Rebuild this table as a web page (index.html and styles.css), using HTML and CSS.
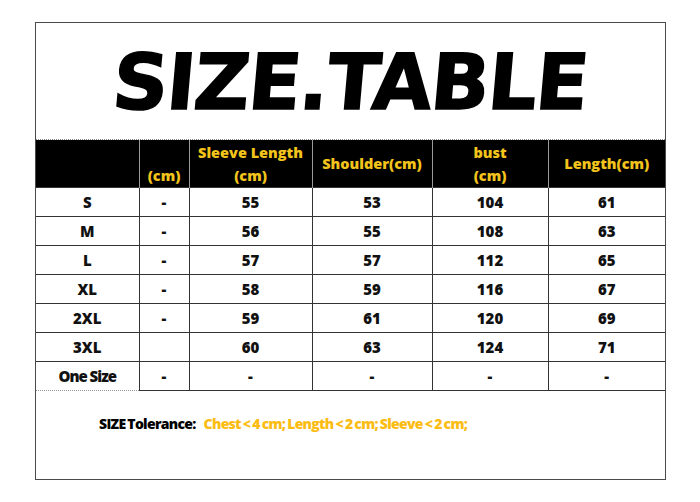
FILE: index.html
```html
<!DOCTYPE html>
<html>
<head>
<meta charset="utf-8">
<link rel="stylesheet" href="styles.css">
</head>
<body>
<div class="sheet">
  <div class="title"><span class="title-text">SIZE.TABLE</span></div>
  <table class="sizes">
    <colgroup>
      <col class="c1"><col class="c2"><col class="c3"><col class="c4"><col class="c5"><col class="c6">
    </colgroup>
    <thead>
      <tr>
        <th class="first"></th>
        <th class="bottom">(cm)</th>
        <th>Sleeve Length<br>(cm)</th>
        <th>Shoulder(cm)</th>
        <th>bust<br>(cm)</th>
        <th class="last">Length(cm)</th>
      </tr>
    </thead>
    <tbody>
      <tr><td class="first">S</td><td>-</td><td>55</td><td>53</td><td>104</td><td class="last">61</td></tr>
      <tr><td class="first">M</td><td>-</td><td>56</td><td>55</td><td>108</td><td class="last">63</td></tr>
      <tr><td class="first">L</td><td>-</td><td>57</td><td>57</td><td>112</td><td class="last">65</td></tr>
      <tr><td class="first">XL</td><td>-</td><td>58</td><td>59</td><td>116</td><td class="last">67</td></tr>
      <tr><td class="first">2XL</td><td>-</td><td>59</td><td>61</td><td>120</td><td class="last">69</td></tr>
      <tr><td class="first">3XL</td><td></td><td>60</td><td>63</td><td>124</td><td class="last">71</td></tr>
      <tr class="lastrow"><td class="first onesize">One Size</td><td>-</td><td>-</td><td>-</td><td>-</td><td class="last">-</td></tr>
    </tbody>
  </table>
  <div class="tolerance">
    <span class="tol-label">SIZE Tolerance:</span>
    <span class="tol-values">Chest &lt; 4 cm; Length &lt; 2 cm; Sleeve &lt; 2 cm;</span>
  </div>
</div>
</body>
</html>
```

FILE: styles.css
```css
html, body {
  margin: 0;
  padding: 0;
  background: #ffffff;
}

body {
  width: 700px;
  height: 502px;
  overflow: hidden;
  font-family: "Open Sans", "DejaVu Sans", sans-serif;
}

.sheet {
  box-sizing: border-box;
  margin: 22px 0 0 35px;
  width: 631px;
  height: 458px;
  border: 1px solid #4a4a4a;
  display: flex;
  flex-direction: column;
}

.title {
  height: 116px;
  display: flex;
  align-items: center;
  justify-content: center;
  border-bottom: 1px dotted #888;
}

.title-text {
  font-family: "DejaVu Sans", sans-serif;
  font-weight: bold;
  font-size: 77px;
  letter-spacing: -1.4px;
  color: #000;
  -webkit-text-stroke: 1.5px #000;
  line-height: 1;
  display: inline-block;
  transform: skewX(-5deg);
  margin-top: 2px;
}

.sizes {
  border-collapse: collapse;
  table-layout: fixed;
  width: 629px;
}

.c1 { width: 103px; }
.c2 { width: 50px; }
.c3 { width: 123px; }
.c4 { width: 120px; }
.c5 { width: 116px; }
.c6 { width: 117px; }

.sizes th {
  background: #000;
  color: #f3c41b;
  font-weight: 800;
  font-size: 14.5px;
  line-height: 23px;
  height: 47px;
  padding: 0;
  text-align: center;
  vertical-align: middle;
  border-left: 1px solid #9a9a9a;
  white-space: nowrap;
}

.sizes th.first {
  border-left: none;
}

.sizes th.bottom {
  vertical-align: bottom;
}

.sizes td {
  height: 28px;
  padding: 0;
  text-align: center;
  vertical-align: middle;
  font-weight: 800;
  font-size: 15px;
  color: #111;
  border: 1px solid #333;
}

.sizes td.first {
  border-left: none;
}

.sizes td.last {
  border-right: none;
}

.sizes .onesize {
  letter-spacing: -1px;
}

.sizes tr.lastrow td {
  border-bottom: 1px solid #333;
}

.sizes tr.lastrow td.first {
  border-bottom: 1px dotted #999;
}

.tolerance {
  flex: 1;
  padding: 23px 0 0 63px;
  font-size: 14px;
  font-weight: 800;
  letter-spacing: -0.7px;
  word-spacing: -1px;
  white-space: nowrap;
}

.tol-label {
  color: #000;
  margin-right: 6px;
}

.tol-values {
  color: #fbbc14;
}
```
